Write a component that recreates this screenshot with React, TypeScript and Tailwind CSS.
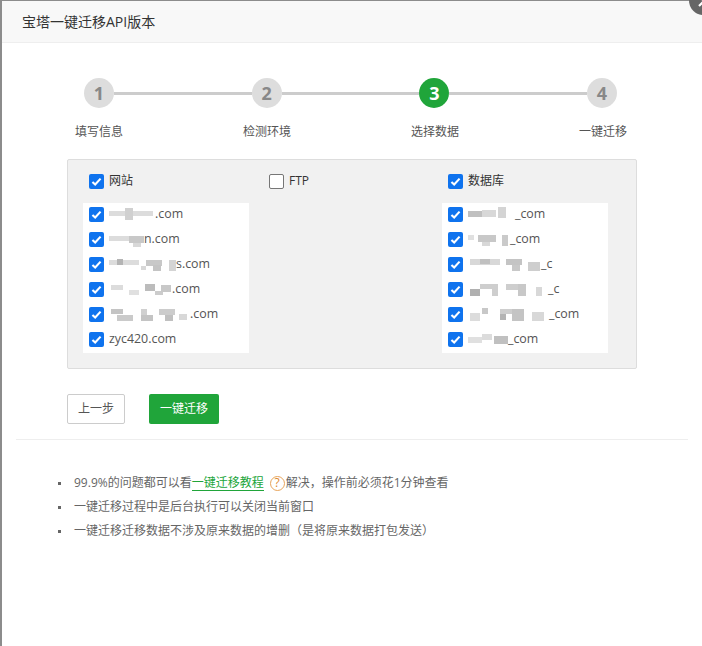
import React from 'react';

const CJK = '"Open Sans","Noto Sans CJK SC",sans-serif';

const Check = ({ checked = true }: { checked?: boolean }) =>
  checked ? (
    <span className="flex h-[15px] w-[15px] shrink-0 items-center justify-center rounded-[2px] bg-[#0f73ee]">
      <svg viewBox="0 0 16 16" className="h-[13px] w-[13px]" fill="none" stroke="#fff" strokeWidth="2.6">
        <path d="M3 8.5l3.4 3.2L13 4.5" />
      </svg>
    </span>
  ) : (
    <span className="h-[15px] w-[15px] shrink-0 rounded-[2px] border border-[#767676] bg-white" />
  );

// mosaic blocks standing in for the blurred part of each name
type Block = [number, number, number, number, string];

const Mosaic = ({ width, blocks }: { width: number; blocks: Block[] }) => (
  <svg width={width} height="16" viewBox={`0 0 ${width} 16`} className="shrink-0 blur-[0.5px]">
    {blocks.map(([x, y, w, h, fill], i) => (
      <rect key={i} x={x} y={y} width={w} height={h} fill={fill} />
    ))}
  </svg>
);

const sites: { width: number; blocks: Block[]; tail: string }[] = [
  { width: 46, tail: '.com', blocks: [[0, 5, 44, 5, '#dcdcdc'], [16, 2, 8, 12, '#d0d0d0']] },
  { width: 35, tail: 'n.com', blocks: [[0, 5, 24, 5, '#dcdcdc'], [20, 5, 15, 7, '#c8c8c8'], [24, 12, 8, 4, '#d8d8d8']] },
  { width: 67, tail: 's.com', blocks: [[0, 4, 30, 5, '#dcdcdc'], [8, 3, 6, 6, '#b4b4b4'], [37, 4, 16, 6, '#c8c8c8'], [44, 9, 8, 6, '#c4c4c4'], [32, 10, 5, 4, '#d8d8d8'], [60, 4, 7, 11, '#d4d4d4']] },
  { width: 63, tail: '.com', blocks: [[2, 4, 12, 5, '#dcdcdc'], [20, 9, 10, 5, '#e0e0e0'], [36, 3, 10, 7, '#bcbcbc'], [46, 10, 8, 4, '#cccccc'], [52, 4, 10, 7, '#c8c8c8']] },
  { width: 81, tail: '.com', blocks: [[2, 3, 12, 5, '#c4c4c4'], [8, 9, 16, 6, '#cacaca'], [32, 3, 6, 6, '#d0d0d0'], [32, 9, 12, 6, '#c4c4c4'], [50, 3, 16, 6, '#cccccc'], [56, 9, 8, 6, '#c0c0c0'], [70, 8, 8, 6, '#d8d8d8']] },
];

const databases: { width: number; blocks: Block[]; tail: string }[] = [
  { width: 47, tail: '_com', blocks: [[0, 5, 14, 6, '#c0c0c0'], [14, 4, 14, 7, '#d8d8d8'], [30, 1, 8, 11, '#d4d4d4']] },
  { width: 42, tail: '_com', blocks: [[0, 4, 6, 5, '#e0e0e0'], [10, 4, 18, 7, '#c8c8c8'], [14, 11, 8, 4, '#d8d8d8'], [34, 4, 6, 11, '#cacaca']] },
  { width: 73, tail: '_c', blocks: [[2, 3, 30, 6, '#d8d8d8'], [12, 3, 10, 5, '#c0c0c0'], [38, 3, 16, 6, '#c4c4c4'], [44, 9, 8, 6, '#c8c8c8'], [60, 6, 12, 9, '#cecece']] },
  { width: 80, tail: '_c', blocks: [[2, 8, 10, 7, '#b0b0b0'], [12, 3, 16, 5, '#cecece'], [24, 3, 6, 12, '#cecece'], [38, 3, 18, 6, '#cecece'], [50, 3, 8, 12, '#c8c8c8'], [68, 6, 6, 9, '#d8d8d8']] },
  { width: 81, tail: '_com', blocks: [[2, 7, 10, 8, '#dcdcdc'], [14, 2, 6, 6, '#c8c8c8'], [32, 8, 6, 6, '#b4b4b4'], [32, 3, 24, 5, '#cecece'], [44, 3, 12, 12, '#c4c4c4'], [64, 6, 12, 9, '#d8d8d8']] },
  { width: 40, tail: '_com', blocks: [[0, 6, 14, 6, '#e0e0e0'], [14, 3, 10, 6, '#dcdcdc'], [26, 5, 14, 8, '#c0c0c0']] },
];

const steps = ['填写信息', '检测环境', '选择数据', '一键迁移'];

const Row = ({ width, blocks, tail }: { width: number; blocks: Block[]; tail: string }) => (
  <div className="flex h-[25px] items-center pb-[2px]">
    <Check />
    <span className="ml-[5px] flex items-center text-[12.4px] text-[#555]">
      <Mosaic width={width} blocks={blocks} />
      {tail}
    </span>
  </div>
);

const Head = ({ label, checked = true }: { label: string; checked?: boolean }) => (
  <div className="flex h-[18px] items-center pl-[6px]">
    <Check checked={checked} />
    <span className="ml-[5px] text-[12px] text-[#333]">{label}</span>
  </div>
);

const Dot = () => <span className="mr-[13px] h-[3px] w-[3px] shrink-0 bg-[#666]" />;

export default function App() {
  return (
    <div className="h-[646px] w-[702px] overflow-hidden bg-[#8c8c8c] pl-[2px] pt-[1px]" style={{ fontFamily: CJK }}>
      <div className="relative h-full bg-white">
        <div className="flex h-[42px] items-center border-b border-[#eeeeee] bg-[#f8f8f8] pl-[20px] text-[14px] text-[#333]">
          宝塔一键迁移API版本
        </div>

        <div className="pl-[65px] pt-[35px]">
          <div className="flex w-[550px] items-center pl-[17px]">
            {[1, 2, 3, 4].map(n => (
              <React.Fragment key={n}>
                <span
                  className={`flex h-[30px] w-[30px] shrink-0 items-center justify-center rounded-full text-[18px] font-bold ${
                    n === 3 ? 'bg-[#20a53a] text-white' : 'bg-[#dddddd] text-[#888]'
                  }`}
                >
                  {n}
                </span>
                {n < 4 && <span className="h-[3px] flex-1 bg-[#cccccc]" />}
              </React.Fragment>
            ))}
          </div>
          <div className="mt-[15px] flex w-[560px] justify-between pl-[8px] text-[12px] text-[#555]">
            {steps.map(s => (
              <span key={s}>{s}</span>
            ))}
          </div>
        </div>

        <div className="ml-[65px] mt-[18px] flex h-[210px] w-[570px] rounded-[2px] border border-[#dddddd] bg-[#f1f1f1] pl-[15px] pt-[12px]">
          <div className="w-[179px]">
            <Head label="网站" />
            <div className="mt-[13px] h-[150px] w-[166px] bg-white pl-[6px]">
              {sites.map((s, i) => (
                <Row key={i} {...s} />
              ))}
              <div className="flex h-[25px] items-center pb-[2px]">
                <Check />
                <span className="ml-[5px] text-[12.4px] text-[#555]">zyc420.com</span>
              </div>
            </div>
          </div>
          <div className="w-[180px] pl-[1px]">
            <Head label="FTP" checked={false} />
          </div>
          <div>
            <Head label="数据库" />
            <div className="mt-[13px] h-[150px] w-[166px] bg-white pl-[6px]">
              {databases.map((d, i) => (
                <Row key={i} {...d} />
              ))}
            </div>
          </div>
        </div>

        <div className="ml-[65px] mt-[25px] flex gap-[24px] text-[12px]">
          <button className="h-[30px] w-[58px] rounded-[2px] border border-[#cccccc] bg-white text-[#555]">上一步</button>
          <button className="h-[30px] w-[70px] rounded-[2px] bg-[#20a53a] text-white">一键迁移</button>
        </div>

        <div className="mx-[14px] mt-[15px] w-[672px] border-t border-[#eeeeee]" />

        <ul className="ml-[56px] mt-[31px] text-[12px] leading-[24px] text-[#666]">
          <li className="flex items-center">
            <Dot />
            99.9%的问题都可以看
            <span className="border-b border-[#20a53a] leading-[15px] text-[#20a53a]">一键迁移教程</span>
            <span className="ml-[6px] mr-[1px] flex h-[15px] w-[15px] items-center justify-center rounded-full border-[1.5px] border-[#e8a45a] text-[12px] leading-none text-[#e08a30]">
              ?
            </span>
            解决，操作前必须花1分钟查看
          </li>
          <li className="flex items-center">
            <Dot />
            一键迁移过程中是后台执行可以关闭当前窗口
          </li>
          <li className="flex items-center">
            <Dot />
            一键迁移迁移数据不涉及原来数据的增删（是将原来数据打包发送）
          </li>
        </ul>

        <div className="absolute right-[-16px] top-[-15px] flex h-[29px] w-[29px] items-center justify-center rounded-full bg-[#666]">
          <svg viewBox="0 0 14 14" className="h-[14px] w-[14px]" stroke="#fff" strokeWidth="2.2">
            <path d="M2 2l10 10M12 2L2 12" />
          </svg>
        </div>
      </div>
    </div>
  );
}
